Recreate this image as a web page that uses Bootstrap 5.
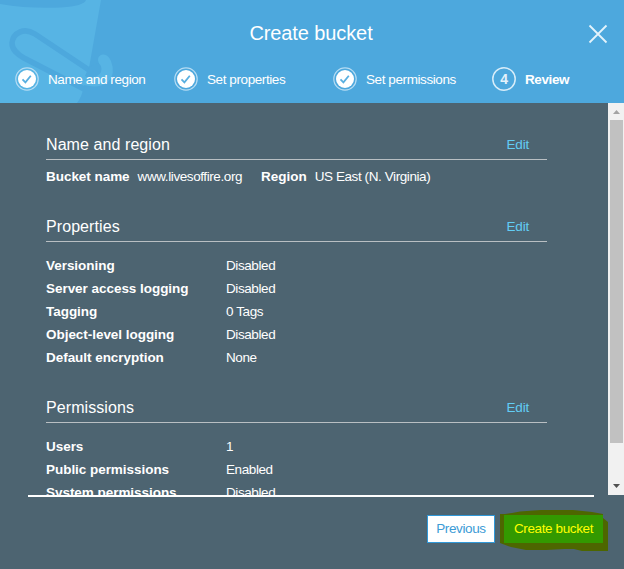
<!DOCTYPE html>
<html lang="en">
<head>
<meta charset="utf-8">
<meta name="viewport" content="width=device-width, initial-scale=1">
<title>Create bucket</title>
<link href="https://cdn.jsdelivr.net/npm/bootstrap@5.3.0/dist/css/bootstrap.min.css" rel="stylesheet">
<style>
body{font-family:"Liberation Sans",Arial,sans-serif;font-size:13.5px;line-height:23px;letter-spacing:-.41px;background:#4d6471;color:#fff}
.wizard{height:569px}
.wizard-head{height:103px;background:#4da8dd}
.bucket-art{left:0;top:0}
.wizard-title{font-size:20px;line-height:24px;padding:21px 2px 0 0;letter-spacing:-.1px}
.close-x{right:16px;top:24px;line-height:0}
.steps{padding:22px 0 0 15px}
.step{width:159px;height:24px;gap:9px;flex:none}
.step svg{flex:none}
.step-now{width:auto}
.wizard-body{height:392px}
.review{padding:30px 61px 0 46px}
.section-head{height:27px;border-bottom:1px solid #b9bfc3;padding-right:18px}
.section-head h2{font-size:16px;line-height:23px;margin:0;font-weight:400;letter-spacing:.08px}
.section-head a{color:#62cdf5;letter-spacing:-.2px}
.inline-row{padding-top:5px;height:55px}
.section-rows{padding-top:12px}
.section-gap{height:27px}
b,dt{font-weight:700;letter-spacing:-.04px}
.region-label{margin-left:19px}
dl,dd{margin:0}
dt{width:180px}
.track{width:16px;background:#f1f1f1}
.thumb{width:13px;height:323px;background:#c1c1c1;margin-left:2px}
.arrow{height:17px}
.rule{height:2px;background:#fff;margin:0 30px 0 28px}
.wizard-foot{padding:18px 21px 0 0;gap:9px}
.wizard-foot .btn{height:28px;padding:0;border-radius:0;font-size:13.5px;line-height:26px;letter-spacing:-.38px}
.btn-prev,.btn-prev:hover{width:68px;background:#fff;border:1px solid #3098d8;color:#3c9bd6}
.btn-create,.btn-create:hover{width:99px;background:#339900;border:1px solid #339900;color:#ff0}
.marker{left:-4px;top:-5px;z-index:0}
</style>
<script src="https://cdn.jsdelivr.net/npm/bootstrap@5.3.0/dist/js/bootstrap.bundle.min.js"></script>
</head>
<body class="overflow-hidden">
<svg class="d-none">
  <symbol id="done" viewBox="0 0 24 24"><circle cx="12" cy="12" r="11.2" fill="none" stroke="#b5dcf3" stroke-width="1.2"/><circle cx="12" cy="12" r="9" fill="#fff"/><path d="M7.500 12.300l2.900 3 5.400-6.600" fill="none" stroke="#59afe0" stroke-width="1.800"/></symbol>
</svg>
<div class="wizard d-flex flex-column">
  <header class="wizard-head position-relative overflow-hidden">
    <svg class="bucket-art position-absolute" width="120" height="103" viewBox="0 0 120 103">
      <path d="M0 0H101L89 68 83 90Q81 98 77 103H0Z" fill="#57b4e4"/>
      <path d="M0 0H86Q84 6 61 7.500Q30 9 0 4Z" fill="#4da8dd"/>
      <path d="M89 70L35 34C24 27 13 33 12 43C12 50 17 54 24 58L84 89" fill="none" stroke="#4da8dd" stroke-width="5.500"/>
      <path d="M89 67L101 62 103 74 96 80 85 76Z" fill="#4da8dd"/>
      <path d="M98 60Q98 55 103 54.500Q108 54 111 61Q116 74 108 82Q99 89 84 85L74 80 78 74Q90 80 97 76Q103 73 101 66Q98 63 98 60Z" fill="#57b4e4"/>
    </svg>
    <h1 class="wizard-title text-center fw-normal m-0 position-relative">Create bucket</h1>
    <div class="close-x position-absolute"><svg width="20" height="20"><path d="M1.500 1.500L18.500 18.500M18.500 1.500L1.500 18.500" stroke="#e4f3fc" stroke-width="1.800"/></svg></div>
    <div class="steps d-flex position-relative">
      <div class="step d-flex align-items-center"><svg width="24" height="24"><use href="#done"/></svg><span>Name and region</span></div>
      <div class="step d-flex align-items-center"><svg width="24" height="24"><use href="#done"/></svg><span>Set properties</span></div>
      <div class="step d-flex align-items-center"><svg width="24" height="24"><use href="#done"/></svg><span>Set permissions</span></div>
      <div class="step step-now d-flex align-items-center fw-bold"><svg width="24" height="24"><circle cx="12" cy="12" r="11.200" fill="none" stroke="#d8edf9" stroke-width="1.500"/><text x="12" y="17" text-anchor="middle" font-size="14" fill="#e3f2fb">4</text></svg><span>Review</span></div>
    </div>
  </header>
  <main class="wizard-body d-flex overflow-hidden">
    <div class="review flex-grow-1">
      <section>
        <div class="section-head d-flex justify-content-between"><h2>Name and region</h2><a href="#" class="text-decoration-none">Edit</a></div>
        <div class="inline-row d-flex"><b>Bucket name</b><span class="ms-2">www.livesoffire.org</span><b class="region-label">Region</b><span class="ms-2">US East (N. Virginia)</span></div>
      </section>
      <section>
        <div class="section-head d-flex justify-content-between"><h2>Properties</h2><a href="#" class="text-decoration-none">Edit</a></div>
        <dl class="section-rows">
          <div class="d-flex"><dt>Versioning</dt><dd>Disabled</dd></div>
          <div class="d-flex"><dt>Server access logging</dt><dd>Disabled</dd></div>
          <div class="d-flex"><dt>Tagging</dt><dd>0 Tags</dd></div>
          <div class="d-flex"><dt>Object-level logging</dt><dd>Disabled</dd></div>
          <div class="d-flex"><dt>Default encryption</dt><dd>None</dd></div>
        </dl>
        <div class="section-gap"></div>
      </section>
      <section>
        <div class="section-head d-flex justify-content-between"><h2>Permissions</h2><a href="#" class="text-decoration-none">Edit</a></div>
        <dl class="section-rows">
          <div class="d-flex"><dt>Users</dt><dd>1</dd></div>
          <div class="d-flex"><dt>Public permissions</dt><dd>Enabled</dd></div>
          <div class="d-flex"><dt>System permissions</dt><dd>Disabled</dd></div>
        </dl>
      </section>
    </div>
    <div class="track d-flex flex-column flex-shrink-0">
      <svg class="arrow flex-shrink-0" width="16" height="17"><path d="M5 11L8.500 7 12 11Z" fill="#a3a3a3"/></svg>
      <div class="thumb flex-shrink-0"></div>
      <svg class="arrow flex-shrink-0 mt-auto" width="16" height="17"><path d="M5 6L8.500 10 12 6Z" fill="#505050"/></svg>
    </div>
  </main>
  <div class="rule flex-shrink-0"></div>
  <footer class="wizard-foot d-flex justify-content-end">
    <button class="btn btn-prev">Previous</button>
    <div class="position-relative">
      <svg class="marker position-absolute" width="108" height="42"><path d="M0 4H5L12 3 20 1.500 41 0H73L92 2 103 4V8L108 12V41H82L74 39H64L46 40H26L11 37 0 33Z" fill="#4d6600"/></svg>
      <button class="btn btn-create position-relative">Create bucket</button>
    </div>
  </footer>
</div>
</body>
</html>
